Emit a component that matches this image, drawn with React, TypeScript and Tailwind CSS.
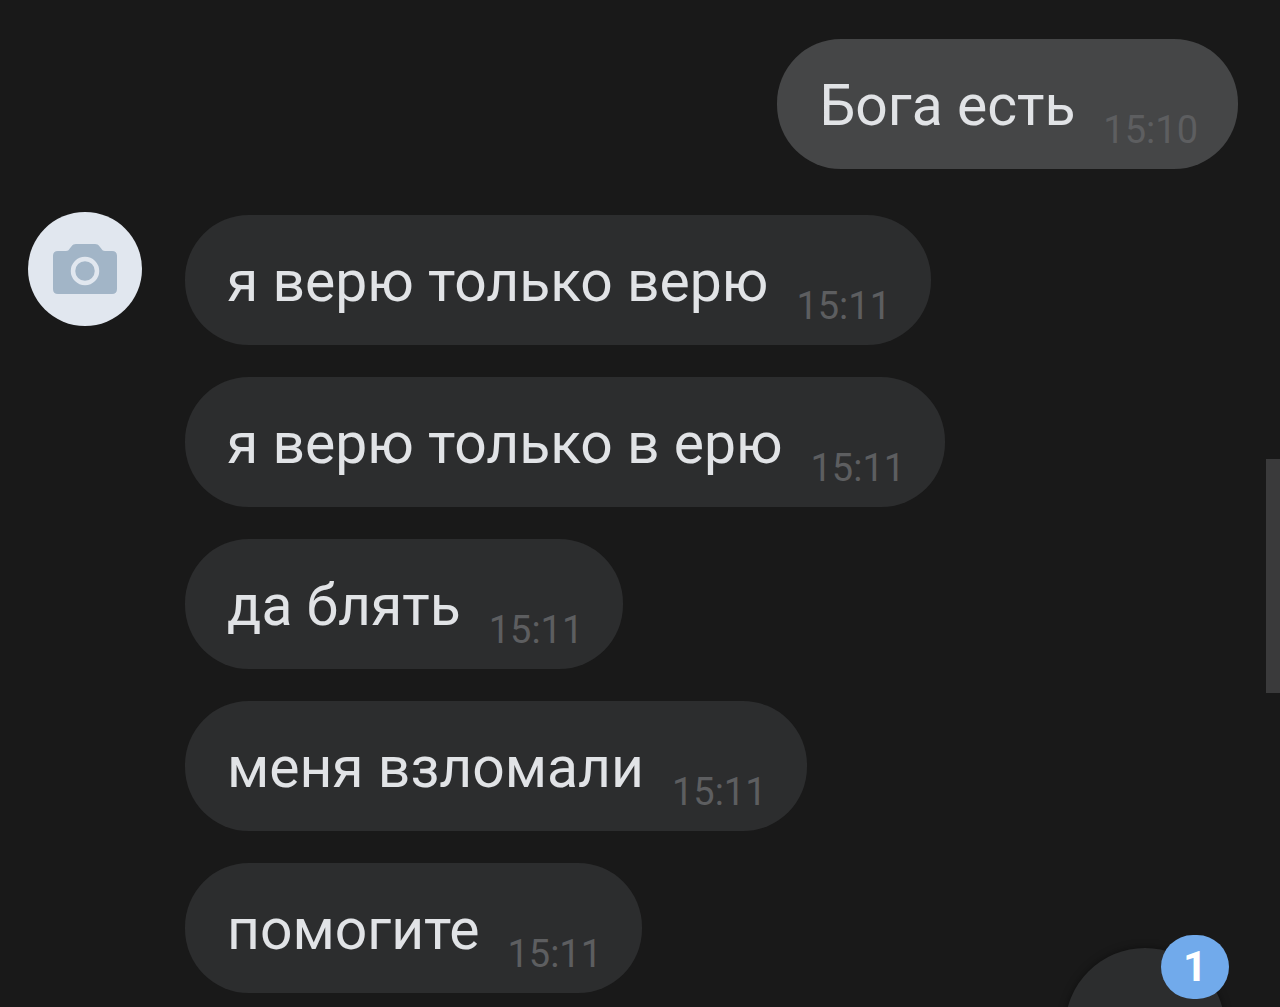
import React from "react";
import clsx from "clsx";

type Message = {
  id:   number;
  text: string;
  time: string;
};

const OUTGOING: Message[] = [{ id: 1, text: "Бога есть", time: "15:10" }];

const INCOMING: Message[] = [
  { id: 2, text: "я верю только верю", time: "15:11" },
  { id: 3, text: "я верю только в ерю", time: "15:11" },
  { id: 4, text: "да блять", time: "15:11" },
  { id: 5, text: "меня взломали", time: "15:11" },
  { id: 6, text: "помогите", time: "15:11" },
];

function Bubble({ message, own }: { message: Message; own?: boolean }) {
  return (
    <li
      className={clsx(
        "flex items-end gap-7 rounded-[64px] pt-[33px] pr-10 pb-[15px] pl-[42px]",
        own ? "bg-[#454647]" : "bg-[#2c2d2e]"
      )}
    >
      <p className="pb-3.5 text-[57px] leading-[68px] text-[#e1e3e6]">{message.text}</p>
      <time className="text-[38px] leading-[48px] text-[#5d5e60]">{message.time}</time>
    </li>
  );
}

// Placeholder shown for users without a photo
function Avatar() {
  return (
    <div className="flex size-[114px] shrink-0 items-center justify-center rounded-full bg-[#e1e7ef]">
      <svg viewBox="0 0 64 50" className="h-[50px] w-16" aria-hidden="true">
        <path
          d="M5 7h8c2 0 2.500-.8 3.600-2.200l1.800-2.300C19.800.7 21 0 23 0h19c2 0 3.200.7 4.600 2.500l1.800 2.300C49.500 6.200 50 7 52 7h7c3.300 0 5 1.700 5 5v33c0 3.300-1.700 5-5 5H5c-3.300 0-5-1.700-5-5V12c0-3.300 1.700-5 5-5Z"
          fill="#a2b5c7"
        />
        <circle cx="32" cy="27" r="12" fill="none" stroke="#e1e7ef" strokeWidth="4.500" />
      </svg>
    </div>
  );
}

export default function App() {
  return (
    <main className="relative h-screen overflow-hidden bg-[#191919] pt-[39px] font-['Roboto',sans-serif]">
      <ul className="flex flex-col items-end pr-[42px]">
        {OUTGOING.map((m) => (
          <Bubble key={m.id} message={m} own />
        ))}
      </ul>

      <section className="mt-[43px] flex gap-[43px] pl-7">
        <Avatar />
        <ul className="flex flex-col items-start gap-8 pt-[3px]">
          {INCOMING.map((m) => (
            <Bubble key={m.id} message={m} />
          ))}
        </ul>
      </section>

      {/* Scroll thumb */}
      <div className="absolute top-[459px] right-0 h-[234px] w-3.5 bg-[#3a3a3b]" />

      {/* Jump to the newest message */}
      <button
        type="button"
        aria-label="1"
        className="absolute right-[55px] -bottom-[101px] size-40 rounded-full bg-[#2c2d2e] shadow-[0_0_8px_rgba(0,0,0,0.4)]"
      >
        <span className="absolute -top-[13px] -right-1 flex h-16 w-[68px] items-center justify-center rounded-full bg-[#71aaeb] text-[42px] leading-none font-bold text-white">
          1
        </span>
      </button>
    </main>
  );
}
